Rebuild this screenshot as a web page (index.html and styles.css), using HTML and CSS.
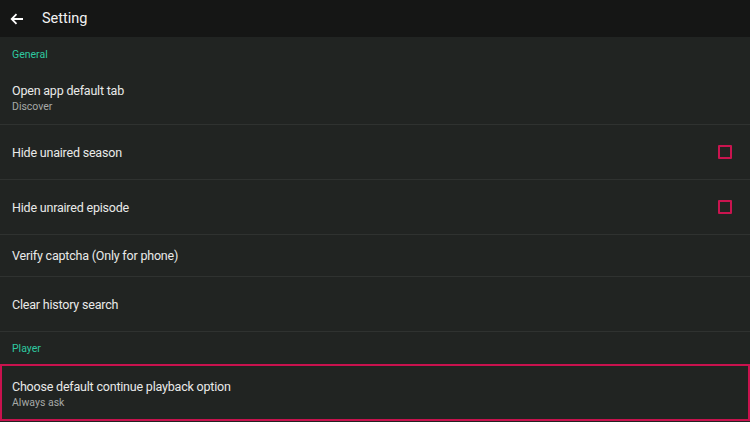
FILE: index.html
```html
<!DOCTYPE html>
<html>
<head>
<meta charset="utf-8">
<link rel="stylesheet" href="styles.css">
</head>
<body>
<header class="topbar">
  <svg class="back" width="14" height="12" viewBox="0 0 14 12"><path d="M13 6H2M6.5 1.2L1.7 6l4.8 4.8" fill="none" stroke="#fff" stroke-width="1.8"/></svg>
  <span class="title">Setting</span>
</header>
<main class="list">
  <div class="section">General</div>
  <div class="row r54 sep"><div class="texts"><div class="t">Open app default tab</div><div class="s">Discover</div></div></div>
  <div class="row r55 sep"><div class="texts"><div class="t">Hide unaired season</div></div><span class="check"></span></div>
  <div class="row r55 sep"><div class="texts"><div class="t">Hide unraired episode</div></div><span class="check"></span></div>
  <div class="row r41 sep"><div class="texts"><div class="t">Verify captcha (Only for phone)</div></div></div>
  <div class="row r55 sep"><div class="texts"><div class="t">Clear history search</div></div></div>
  <div class="section player">Player</div>
  <div class="row focus"><div class="texts"><div class="t">Choose default continue playback option</div><div class="s">Always ask</div></div></div>
</main>
</body>
</html>
```
FILE: styles.css
```css
* { box-sizing: border-box; }
html, body { margin: 0; padding: 0; }
body {
  width: 750px; height: 422px; overflow: hidden;
  background: #212422;
  font-family: Roboto, "Noto Sans", sans-serif;
  color: #e6e7e6;
}
.topbar {
  height: 37px; background: #151615;
  display: flex; align-items: center;
  padding-left: 10px;
}
.back { display: block; }
.title { margin-left: 18px; font-size: 14.5px; color: #f2f2f2; }
.section {
  height: 33px; padding: 11px 12px 0;
  font-size: 10.5px; color: #2ec9a0;
}
.player { height: 32px; padding-top: 10px; }
.row {
  display: flex; align-items: center; justify-content: space-between;
  padding: 0 12px;
}
.sep { border-bottom: 1px solid #2f3230; }
.r54 { height: 55px; padding-top: 2px; }
.r55 { height: 55px; }
.r41 { height: 42px; }
.t { font-size: 12.5px; letter-spacing: -0.2px; color: #e9eae9; }
.s { font-size: 10.5px; color: #a6a9a7; margin-top: 2px; }
.check {
  width: 14px; height: 14px; border: 2px solid #c9144f;
  border-radius: 1px; margin-right: 6px;
}
.focus {
  height: 57px; border: 2px solid #c8124e;
  padding-left: 10px; padding-top: 2px;
}
```
